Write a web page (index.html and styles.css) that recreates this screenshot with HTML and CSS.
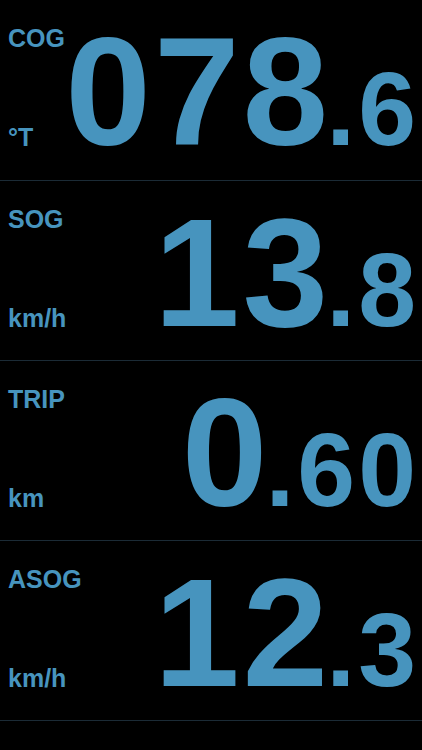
FILE: index.html
```html
<!DOCTYPE html>
<html>
<head>
	<meta charset="UTF-8">
	<title>Instruments</title>
	<link rel="stylesheet" href="styles.css">
</head>
<body>
<div class="list">
	<div class="row">
		<div class="labels">
			<span class="name">COG</span>
			<span class="unit">°T</span>
		</div>
		<div class="value">078<span class="dec">.6</span></div>
	</div>
	<div class="row">
		<div class="labels">
			<span class="name">SOG</span>
			<span class="unit">km/h</span>
		</div>
		<div class="value">13<span class="dec">.8</span></div>
	</div>
	<div class="row">
		<div class="labels">
			<span class="name">TRIP</span>
			<span class="unit">km</span>
		</div>
		<div class="value">0<span class="dec">.60</span></div>
	</div>
	<div class="row">
		<div class="labels">
			<span class="name">ASOG</span>
			<span class="unit">km/h</span>
		</div>
		<div class="value">12<span class="dec">.3</span></div>
	</div>
	<div class="row">
		<div class="labels">
			<span class="name">MSOG</span>
			<span class="unit">km/h</span>
		</div>
		<div class="value">15<span class="dec">.1</span></div>
	</div>
</div>
</body>
</html>
```
FILE: styles.css
```css
html,body{
	margin: 0;
	padding: 0;
	background-color: #000;
}
body{
	width: 422px;
	height: 750px;
	overflow: hidden;
	font-family: "Liberation Sans", Arial, sans-serif;
	font-weight: bold;
	color: #4794be;
}
.row{
	display: flex;
	align-items: flex-start;
	height: 180px;
	box-sizing: border-box;
	padding: 15px 3px 0 8px;
	overflow: hidden;
}
.row + .row{
	border-top: 1px solid #1b2b36;
}
.labels{
	display: flex;
	flex-direction: column;
	margin-top: 11px;
	font-size: 25px;
	line-height: 25px;
}
.unit{
	margin-top: 74px;
}
.value{
	margin-left: auto;
	font-size: 154px;
	line-height: 154px;
	letter-spacing: 3px;
	white-space: nowrap;
}
.dec{
	font-size: 104px;
	margin-left: -5px;
}
```
